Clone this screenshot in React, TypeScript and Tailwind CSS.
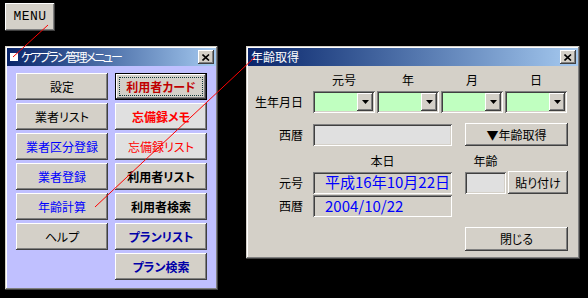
import type { ReactNode } from "react";

const font = "font-['Noto_Sans_CJK_JP','Liberation_Sans',sans-serif] [font-feature-settings:'palt']";
const raised =
  "bg-[#d4d0c8] shadow-[inset_-1px_-1px_0_#404040,inset_1px_1px_0_#ffffff,inset_-2px_-2px_0_#808080]";
const sunken =
  "shadow-[inset_1px_1px_0_#808080,inset_-1px_-1px_0_#ffffff,inset_2px_2px_0_#404040,inset_-2px_-2px_0_#d4d0c8]";
const frame =
  "p-[2px] shadow-[inset_-1px_-1px_0_#404040,inset_1px_1px_0_#d4d0c8,inset_-2px_-2px_0_#808080,inset_2px_2px_0_#ffffff]";

type MenuButton = {
  label: string;
  className: string;
  bg?: string;
  isDefault?: boolean;
};

const leftButtons: MenuButton[] = [
  { label: "設定", className: "text-black" },
  { label: "業者リスト", className: "text-black" },
  { label: "業者区分登録", className: "text-[#0000ff]" },
  { label: "業者登録", className: "text-[#0000ff]" },
  { label: "年齢計算", className: "text-[#0000ff]" },
  { label: "ヘルプ", className: "text-black" },
];

const rightButtons: MenuButton[] = [
  { label: "利用者カード", className: "text-[#c00000] font-bold", isDefault: true },
  { label: "忘備録メモ", className: "text-[#ff0000] font-bold", bg: "bg-[#e0e0e0]" },
  { label: "忘備録リスト", className: "text-[#ff0000]", bg: "bg-[#e0e0e0]" },
  { label: "利用者リスト", className: "text-black font-bold" },
  { label: "利用者検索", className: "text-black font-bold" },
  { label: "プランリスト", className: "text-[#0000a8] font-bold" },
  { label: "プラン検索", className: "text-[#0000a8] font-bold" },
];

function CloseButton() {
  return (
    <div className={`${raised} flex h-[14px] w-[16px] items-center justify-center`}>
      <svg width="8" height="7" viewBox="0 0 8 7">
        <path d="M0.5 0.5 L7 6.5 M7 0.5 L0.5 6.5" stroke="#000" strokeWidth="1.6" />
      </svg>
    </div>
  );
}

function TitleBar({ children }: { children: ReactNode }) {
  return (
    <div className="flex h-[18px] items-center justify-between bg-gradient-to-r from-[#0a246a] to-[#a6caf0] pl-[3px] pr-[2px]">
      <div className="flex items-center gap-[2px] text-[12px] leading-none text-white">{children}</div>
      <CloseButton />
    </div>
  );
}

function MenuBtn({ b }: { b: MenuButton }) {
  if (b.isDefault) {
    return (
      <div className="h-[27px] w-[92px] border border-black">
        <div
          className={`${raised} flex h-full w-full items-center justify-center p-[3px]`}
        >
          <div
            className={`flex h-full w-full items-center justify-center border border-dotted border-[#103838] text-[12px] ${b.className}`}
          >
            {b.label}
          </div>
        </div>
      </div>
    );
  }
  return (
    <div
      className={`${raised} ${b.bg ?? ""} flex h-[27px] w-[92px] items-center justify-center text-[12px] ${b.className}`}
    >
      {b.label}
    </div>
  );
}

function Combo() {
  return (
    <div className={`${sunken} flex h-[22px] w-[62px] bg-[#c0ffc0] p-[2px]`}>
      <div className="flex-1" />
      <div className={`${raised} flex h-full w-[16px] items-center justify-center`}>
        <svg width="7" height="4" viewBox="0 0 7 4">
          <polygon points="0,0 7,0 3.5,4" fill="#000" />
        </svg>
      </div>
    </div>
  );
}

function Label({ children }: { children: ReactNode }) {
  return <div className="w-[55px] pr-0 text-right text-[12px] text-black">{children}</div>;
}

export default function App() {
  return (
    <div className={`relative h-[298px] w-[588px] overflow-hidden bg-black ${font}`}>
      {/* MENU button */}
      <div
        className={`${raised} absolute left-[5px] top-[3px] flex h-[28px] w-[50px] items-center justify-center font-['Liberation_Mono',monospace] text-[13px] tracking-[0.5px] text-black`}
      >
        MENU
      </div>

      {/* menu window */}
      <div className={`absolute left-[5px] top-[46px] h-[244px] w-[213px] bg-[#d4d0c8] ${frame}`}>
        <TitleBar>
          <span className="mr-[1px] inline-block h-[8px] w-[8px] bg-white" />
          <span className="tracking-[-2px]">ケアプラン管理メニュー</span>
        </TitleBar>
        <div className="flex h-[222px] gap-[7px] bg-[#c0c0ff] pl-[9px] pt-[7px]">
          <div className="flex flex-col gap-[3px]">
            {leftButtons.map((b) => (
              <MenuBtn key={b.label} b={b} />
            ))}
          </div>
          <div className="flex flex-col gap-[3px]">
            {rightButtons.map((b) => (
              <MenuBtn key={b.label} b={b} />
            ))}
          </div>
        </div>
      </div>

      {/* age dialog */}
      <div className={`absolute left-[246px] top-[46px] h-[213px] w-[334px] bg-[#d4d0c8] ${frame}`}>
        <TitleBar>
          <span>年齢取得</span>
        </TitleBar>
        <div className="flex flex-col pt-[6px] text-[12px] text-black">
          <div className="flex h-[16px] items-center pl-[65px]">
            <div className="flex gap-[2px]">
              {["元号", "年", "月", "日"].map((h) => (
                <div key={h} className="w-[62px] text-center">
                  {h}
                </div>
              ))}
            </div>
          </div>
          <div className="mt-[3px] flex h-[22px] items-center gap-[10px]">
            <Label>生年月日</Label>
            <div className="flex gap-[2px]">
              <Combo />
              <Combo />
              <Combo />
              <Combo />
            </div>
          </div>
          <div className="mt-[10px] flex h-[23px] items-center gap-[10px]">
            <Label>西暦</Label>
            <div className={`${sunken} h-[22px] w-[139px] bg-[#e0e0e0]`} />
            <div
              className={`${raised} ml-[3px] flex h-[23px] w-[103px] items-center justify-center text-[12px]`}
            >
              ▼年齢取得
            </div>
          </div>
          <div className="mt-[7px] flex h-[16px] items-center pl-[65px]">
            <div className="w-[139px] text-center">本日</div>
            <div className="ml-[13px] w-[41px] text-center">年齢</div>
          </div>
          <div className="mt-[2px] flex h-[23px] items-center gap-[10px]">
            <Label>元号</Label>
            <div
              className={`${sunken} flex h-[22px] w-[139px] items-center bg-[#d4d0c8] pl-[12px] text-[15px] text-[#0000ff]`}
            >
              平成16年10月22日
            </div>
            <div className="ml-[3px] flex items-center gap-[2px]">
              <div className={`${sunken} h-[22px] w-[41px] bg-[#e0e0e0]`} />
              <div className={`${raised} flex h-[23px] w-[60px] items-center justify-center`}>
                貼り付け
              </div>
            </div>
          </div>
          <div className="mt-[1px] flex h-[22px] items-center gap-[10px]">
            <Label>西暦</Label>
            <div
              className={`${sunken} flex h-[22px] w-[139px] items-center bg-[#d4d0c8] pl-[12px] text-[15px] text-[#0000ff]`}
            >
              2004/10/22
            </div>
          </div>
          <div className="mt-[10px] flex pl-[217px]">
            <div className={`${raised} flex h-[24px] w-[103px] items-center justify-center`}>
              閉じる
            </div>
          </div>
        </div>
      </div>

      {/* annotation lines */}
      <svg className="pointer-events-none absolute left-0 top-0" width="588" height="298">
        <line x1="48" y1="25" x2="13" y2="57" stroke="#ff0000" strokeWidth="1" />
        <line x1="95" y1="207" x2="255" y2="57" stroke="#ff0000" strokeWidth="1" />
      </svg>
    </div>
  );
}
